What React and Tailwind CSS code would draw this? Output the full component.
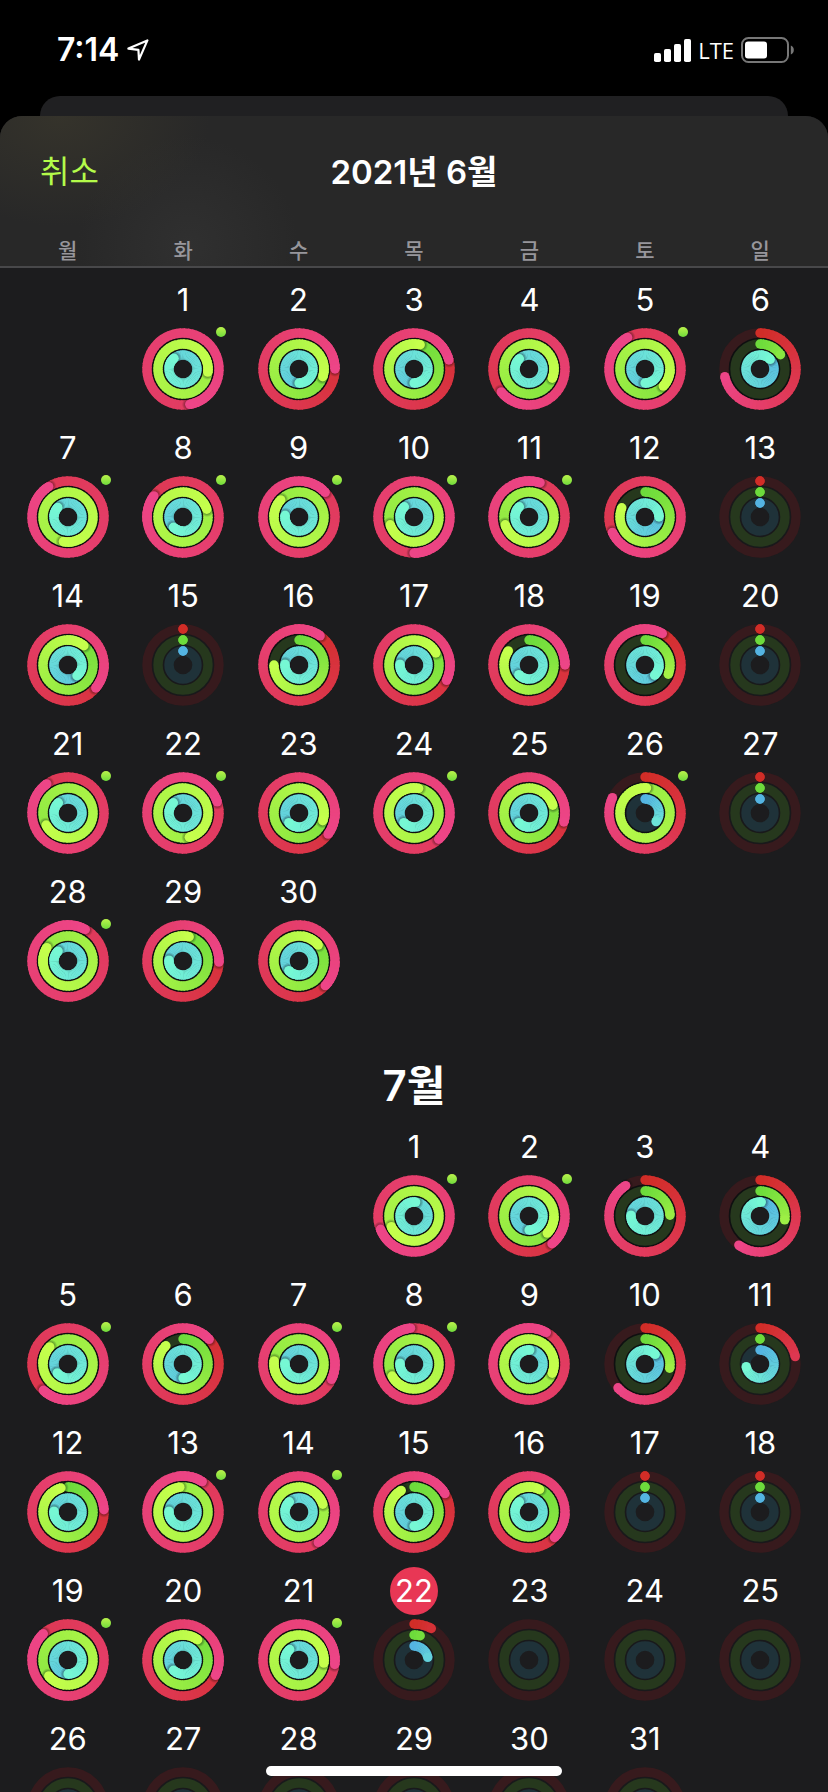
import React from "react";

const WEEKDAYS = ["월", "화", "수", "목", "금", "토", "일"];

// [day, move, exercise, stand, workout]; progress of 1 is one full lap.
const JUNE = [
  [1, 2.47, 2.27, 1.89, true],
  [2, 1.25, 1.3, 1.5],
  [3, 1.21, 1.04, 1.5],
  [4, 1.64, 1.31, 1.88],
  [5, 1.92, 1.37, 1.5, true],
  [6, 0.716, 0.153, 1.13],
  [7, 1.91, 2.53, 1.87, true],
  [8, 1.85, 2.2, 1.62, true],
  [9, 2.13, 1.87, 1.77, true],
  [10, 2.5, 1.7, 1.88, true],
  [11, 2.05, 1.7, 1.88, true],
  [12, 1.68, 0.81, 1.25],
  [13, 0, 0, 0],
  [14, 1.36, 1.11, 1.39],
  [15, 0, 0, 0],
  [16, 1.1, 0.75, 1.76],
  [17, 1.32, 1.17, 1.76],
  [18, 1.25, 0.845, 1.63],
  [19, 1.08, 0.31, 1.38],
  [20, 0, 0, 0],
  [21, 1.9, 1.67, 1.88, true],
  [22, 2.2, 2.46, 1.88, true],
  [23, 1.35, 1.3, 1.63],
  [24, 2.38, 2.03, 1.63, true],
  [25, 1.29, 1.2, 1.63],
  [26, 0.82, 2.01, 0.355, true],
  [27, 0, 0, 0],
  [28, 2.08, 1.84, 1.875, true],
  [29, 1.255, 1.04, 1.76],
  [30, 1.37, 1.14, 1.63],
];

const JULY = [
  [1, 2.69, 2.68, 2.02, true],
  [2, 1.39, 1.37, 1.5, true],
  [3, 0.91, 0.245, 1.76],
  [4, 0.6, 0.275, 1.015],
  [5, 1.62, 1.87, 1.64, true],
  [6, 1.13, 0.88, 1.5],
  [7, 2.32, 1.77, 1.76, true],
  [8, 1.985, 1.67, 1.76, true],
  [9, 2.08, 2.31, 2.01],
  [10, 0.635, 0.277, 1.13],
  [11, 0.217, 0, 0.72],
  [12, 1.24, 0.955, 1.76],
  [13, 2.09, 1.98, 1.76, true],
  [14, 2.41, 2.2, 1.88, true],
  [15, 1.165, 0.915, 1.5],
  [16, 1.375, 1.07, 1.88],
  [17, 0, 0, 0],
  [18, 0, 0, 0],
  [19, 1.88, 1.64, 1.5, true],
  [20, 1.32, 1.1, 1.62],
  [21, 2.27, 2.27, 1.885, true],
  [22, 0.08, 0.04, 0.22],
  [23],
  [24],
  [25],
  [26],
  [27],
  [28],
  [29],
  [30],
  [31],
];

const RINGS = [
  { r: 36, track: "#371a1d", from: [209, 45, 39], to: [237, 69, 135] },
  { r: 25, track: "#26381d", from: [109, 219, 60], to: [197, 255, 76] },
  { r: 14, track: "#1f3239", from: [84, 180, 226], to: [118, 248, 212] },
];

const C = 41;
const STROKE = 9.4;
const STEP = 1 / 60;

function point(r, turn) {
  const a = turn * Math.PI * 2;
  return [C + r * Math.sin(a), C - r * Math.cos(a)];
}

function mix(from, to, t) {
  const c = from.map((v, i) => Math.round(v + (to[i] - v) * t));
  return `rgb(${c.join(",")})`;
}

function arc(r, start, end) {
  const [x0, y0] = point(r, start);
  const [x1, y1] = point(r, end);
  return `M${x0.toFixed(2)} ${y0.toFixed(2)}A${r} ${r} 0 0 1 ${x1.toFixed(2)} ${y1.toFixed(2)}`;
}

function Ring({ ring, progress }) {
  const { r, track, from, to } = ring;
  const color = (turn) => {
    const t = progress > 0 ? turn / progress : 0;
    return mix(from, to, t * Math.min(1, progress * 2));
  };
  const trackCircle = <circle cx={C} cy={C} r={r} fill="none" stroke={track} strokeWidth={STROKE} />;
  if (progress === undefined) return trackCircle;

  const first = Math.max(0, progress - 1);
  const sweep = (start, end) => {
    const parts = [];
    for (let t = start; t < end - 0.0001; t += STEP) {
      const stop = Math.min(end, t + STEP * 1.3);
      parts.push(
        <path
          key={t.toFixed(4)}
          d={arc(r, t, stop)}
          fill="none"
          stroke={color(t + STEP / 2)}
          strokeWidth={STROKE}
        />
      );
    }
    return parts;
  };
  const [sx, sy] = point(r, 0);
  const [ex, ey] = point(r, progress);
  const [hx, hy] = point(r, progress + 0.9 / (2 * Math.PI * r));

  return (
    <g>
      {trackCircle}
      {progress < 1 && <circle cx={sx} cy={sy} r={STROKE / 2} fill={color(0)} />}
      {sweep(first, progress)}
      {progress > 0.9 && (
        <g>
          <circle cx={hx} cy={hy} r="7" fill="url(#cap-shadow)" />
          {sweep(progress - 0.12, progress)}
        </g>
      )}
      <circle cx={ex} cy={ey} r={STROKE / 2} fill={color(progress)} />
    </g>
  );
}

function ActivityRings({ values }) {
  const lit = values[0] > 0.5;
  return (
    <svg className="block size-[82px]" viewBox="0 0 82 82" aria-hidden="true">
      <circle cx={C} cy={C} r="25" fill="none" stroke={lit ? "#0f1011" : "#19191b"} strokeWidth="30" />
      {RINGS.map((ring, i) => (
        <Ring key={ring.r} ring={ring} progress={values[i]} />
      ))}
    </svg>
  );
}

function Day({ data, today }) {
  const [day, move, exercise, stand, workout] = data;
  return (
    <button type="button" className="flex h-[148px] flex-col items-center gap-1 pt-2">
      <span
        className={
          today
            ? "flex size-12 items-center justify-center rounded-full bg-[#e83755] pb-0.5"
            : "flex size-12 items-center justify-center pb-0.5"
        }
      >
        {day}
      </span>
      <span className="relative block">
        <ActivityRings values={[move, exercise, stand]} />
        {workout && (
          <span className="absolute -right-[2px] -top-px size-[10px] rounded-full bg-linear-to-b from-[#b9f24b] to-[#6edb3c]" />
        )}
      </span>
    </button>
  );
}

function Month({ days, offset, today }) {
  return (
    <div className="grid grid-cols-7 px-[10px] text-[31px] leading-none">
      {Array.from({ length: offset }, (_, i) => (
        <span key={`blank-${i}`} />
      ))}
      {days.map((d) => (
        <Day key={d[0]} data={d} today={d[0] === today} />
      ))}
    </div>
  );
}

function StatusBar() {
  return (
    <div className="flex h-24 shrink-0 items-center justify-between pl-[57px] pr-[34px] pt-1">
      <div className="flex items-center gap-2">
        <span className="text-[32px] font-semibold leading-none">7:14</span>
        <svg className="size-[22px]" viewBox="0 0 22 22" fill="none" aria-hidden="true">
          <path
            d="M1.4 9.6 20.4 1.4 12 20.6 11.4 10.8Z"
            stroke="white"
            strokeWidth="2.2"
            strokeLinejoin="round"
          />
        </svg>
      </div>
      <div className="flex items-center gap-[7px]">
        <svg className="h-[23px] w-[37px]" viewBox="0 0 37 23" fill="white" aria-hidden="true">
          <rect x="0" y="14" width="7" height="9" rx="1.8" />
          <rect x="10" y="10" width="7" height="13" rx="1.8" />
          <rect x="20" y="5" width="7" height="18" rx="1.8" />
          <rect x="30" y="0" width="7" height="23" rx="1.8" />
        </svg>
        <span className="font-['Open_Sans','Noto_Sans',sans-serif] text-[22px] font-medium leading-none">
          LTE
        </span>
        <svg className="h-[26px] w-[53px]" viewBox="0 0 53 26" fill="none" aria-hidden="true">
          <rect x="1" y="1" width="46" height="24" rx="6.5" stroke="#777" strokeWidth="2" />
          <rect x="4" y="4.5" width="22" height="17" rx="3" fill="white" />
          <path d="M49.800 8.500c2 .8 3 2.500 3 4.500s-1 3.700-3 4.500Z" fill="#777" />
        </svg>
      </div>
    </div>
  );
}

export default function App() {
  return (
    <div className="relative flex h-screen flex-col overflow-hidden bg-black font-[Inter,'Noto_Sans_CJK_KR',sans-serif] text-white">
      <svg className="absolute size-0" aria-hidden="true">
        <defs>
          <radialGradient id="cap-shadow">
            <stop offset="0.5" stopColor="#000" stopOpacity="0.4" />
            <stop offset="1" stopColor="#000" stopOpacity="0" />
          </radialGradient>
        </defs>
      </svg>

      <StatusBar />
      <div className="mx-10 h-5 shrink-0 rounded-t-[20px] bg-[#202022]" />

      <main className="flex min-h-0 flex-1 flex-col overflow-hidden rounded-t-[22px] bg-[#1c1c1e]">
        <header className="shrink-0 border-b-2 border-[#48484a] bg-[#282828] bg-[radial-gradient(ellipse_150px_110px_at_60px_0px,#35332b,transparent),radial-gradient(circle_110px_at_188px_130px,#303030,transparent)]">
          <div className="grid h-28 grid-cols-3 items-center px-10">
            <button type="button" className="justify-self-start text-[32px] leading-none text-[#b4fb4a]">
              취소
            </button>
            <h1 className="whitespace-nowrap text-center text-[33px] font-semibold leading-none">
              2021년 6월
            </h1>
          </div>
          <div className="grid h-[38px] grid-cols-7 items-center px-[10px] pt-1.5 text-center text-[21px] font-medium leading-none text-[#97969b]">
            {WEEKDAYS.map((w) => (
              <span key={w}>{w}</span>
            ))}
          </div>
        </header>

        <div className="min-h-0 flex-1 overflow-y-auto [scrollbar-width:none]">
          <Month days={JUNE} offset={1} />
          <h2 className="flex h-[107px] items-center justify-center pt-12 text-[42px] font-semibold leading-none">
            7월
          </h2>
          <Month days={JULY} offset={3} today={22} />
        </div>
      </main>

      <div className="absolute bottom-4 left-1/2 h-[10px] w-[296px] -translate-x-1/2 rounded-full bg-white" />
    </div>
  );
}
